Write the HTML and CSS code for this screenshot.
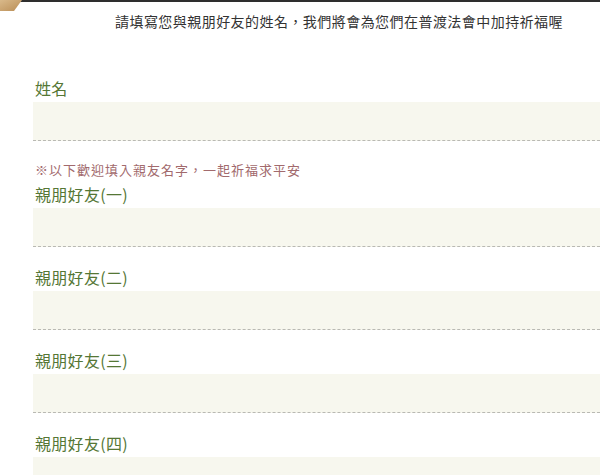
FILE: index.html
```html
<!DOCTYPE html>
<html lang="zh-Hant">
<head>
<meta charset="utf-8">
<title>普渡法會 祈福名單</title>
<link rel="stylesheet" href="styles.css">
</head>
<body>
<div class="topbar">
  <svg class="fold" width="24" height="12" viewBox="0 0 24 12">
    <defs>
      <linearGradient id="g" x1="0" y1="0" x2="1" y2="1">
        <stop offset="0" stop-color="#d9b98a"/>
        <stop offset="1" stop-color="#b98d55"/>
      </linearGradient>
    </defs>
    <polygon points="0,0 22,0 14,11 0,11" fill="url(#g)"/>
  </svg>
</div>
<p class="intro">請填寫您與親朋好友的姓名，我們將會為您們在普渡法會中加持祈福喔</p>
<form class="form">
  <div class="field">
    <label class="label">姓名</label>
    <div class="input"></div>
  </div>
  <p class="note">※以下歡迎填入親友名字，一起祈福求平安</p>
  <div class="field">
    <label class="label">親朋好友(一)</label>
    <div class="input"></div>
  </div>
  <div class="field">
    <label class="label">親朋好友(二)</label>
    <div class="input"></div>
  </div>
  <div class="field">
    <label class="label">親朋好友(三)</label>
    <div class="input"></div>
  </div>
  <div class="field last">
    <label class="label">親朋好友(四)</label>
    <div class="input"></div>
  </div>
</form>
</body>
</html>
```
FILE: styles.css
```css
html, body {
  margin: 0;
  padding: 0;
  background: #ffffff;
  overflow: hidden;
}
body {
  font-family: "Noto Sans CJK TC", "Noto Sans", sans-serif;
  width: 600px;
  height: 475px;
}
.topbar {
  position: relative;
  height: 0;
  border-top: 2px solid #2e2e2e;
  margin-left: 20px;
}
.fold {
  position: absolute;
  left: -20px;
  top: -2px;
  display: block;
}
.intro {
  margin: 0;
  padding: 9px 0 0 115px;
  height: 59px;
  box-sizing: border-box;
  font-size: 14px;
  line-height: 20px;
  letter-spacing: 0.45px;
  color: #333333;
  white-space: nowrap;
}
.form {
  display: flex;
  flex-direction: column;
  padding-left: 33px;
  margin-top: 15px;
  height: 401px;
  overflow: hidden;
}
.field {
  display: flex;
  flex-direction: column;
  flex-shrink: 0;
  margin-bottom: 18px;
}
.label {
  padding: 0 0 2px 2px;
  font-size: 16px;
  line-height: 24px;
  height: 24px;
  color: #557735;
  font-weight: 400;
  letter-spacing: 0.3px;
}
.input {
  height: 38px;
  background: #f7f7ee;
  border-bottom: 1px dashed #b9b9b3;
}
.note {
  margin: 2px 0 3px 2px;
  font-size: 13px;
  line-height: 18px;
  letter-spacing: 1px;
  color: #a26a6d;
}
```
